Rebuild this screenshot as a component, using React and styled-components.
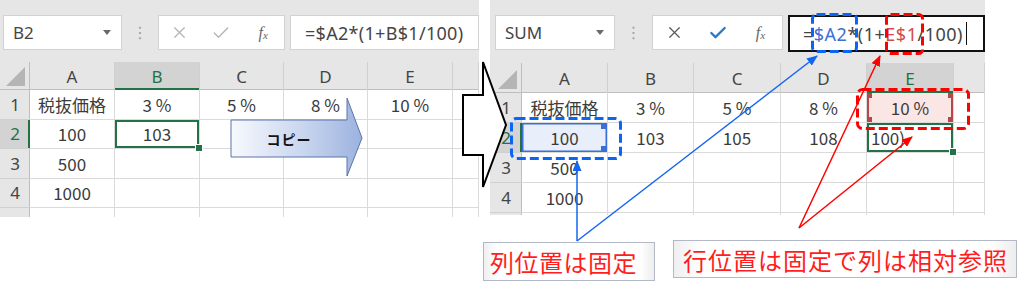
import React from "react";
import styled, { createGlobalStyle, css } from "styled-components";
import { X, Check } from "lucide-react";

const GlobalStyle = createGlobalStyle`
  body {
    margin: 0;
    background: #fff;
  }
`;

const Canvas = styled.div`
  position: relative;
  width: 1024px;
  height: 292px;
  overflow: hidden;
  display: flex;
  align-items: flex-start;
  gap: 11px;
  font-family: "Noto Sans CJK JP", "Noto Sans", sans-serif;
`;

const SheetFrame = styled.div`
  flex: none;
  width: ${(p) => p.$width}px;
  height: ${(p) => p.$height}px;
  overflow: hidden;
  background: #e6e6e6;
  display: flex;
  flex-direction: column;
`;

const FormulaBar = styled.div`
  flex: none;
  height: ${(p) => p.$height}px;
  box-sizing: border-box;
  padding: 15px 0 0 ${(p) => p.$inset}px;
  display: flex;
  align-items: flex-start;
`;

const NameBox = styled.div`
  width: ${(p) => p.$w}px;
  height: 35px;
  box-sizing: border-box;
  background: #fff;
  border: 1px solid #d2d2d2;
  padding: 0 10px 0 9px;
  display: flex;
  align-items: center;
  justify-content: space-between;
  font: 17px "Noto Sans", sans-serif;
  color: #454545;
`;

const DropTri = styled.span`
  width: 0;
  height: 0;
  border-left: 4px solid transparent;
  border-right: 4px solid transparent;
  border-top: 5px solid #6a6a6a;
`;

const Grip = styled.div`
  width: ${(p) => p.$w}px;
  height: 35px;
  display: flex;
  align-items: center;
  justify-content: center;
  font: 16px "DejaVu Sans", sans-serif;
  color: #a0a0a0;
`;

const ButtonBox = styled.div`
  width: ${(p) => p.$w}px;
  height: 35px;
  box-sizing: border-box;
  background: #fff;
  border: 1px solid #d2d2d2;
  display: grid;
  grid-template-columns: repeat(3, 1fr);
  align-items: center;
  justify-items: center;
`;

const Fx = styled.span`
  font: italic 16px "Liberation Serif", serif;
  color: #666;
  sub {
    font-size: 11px;
    vertical-align: -1px;
  }
`;

const FormulaInput = styled.div`
  flex: 1;
  height: ${(p) => (p.$live ? 37 : 35)}px;
  margin-left: 5px;
  box-sizing: border-box;
  background: #fff;
  border: ${(p) => (p.$live ? "2px solid #111" : "1px solid #d2d2d2")};
  padding-left: ${(p) => (p.$live ? 13 : 14)}px;
  display: flex;
  align-items: center;
  font: 18px "Noto Sans", sans-serif;
  letter-spacing: ${(p) => (p.$live ? 0.5 : 0.3)}px;
  color: #454545;
  white-space: nowrap;
`;

const Ref = styled.span`
  color: ${(p) => p.$color};
`;

const TextCaret = styled.span`
  display: inline-block;
  width: 0;
  height: 23px;
  margin-left: 3px;
  border-left: 1px solid #111;
`;

const Grid = styled.div`
  display: grid;
  grid-template-columns: ${(p) => p.$cols};
  grid-template-rows: ${(p) => p.$head}px;
  grid-auto-rows: ${(p) => p.$row}px;
  background: #fff;
`;

const HeadBase = styled.div`
  box-sizing: border-box;
  display: flex;
  align-items: center;
  justify-content: center;
  background: ${(p) => (p.$on ? "#d3d3d3" : "#e6e6e6")};
  color: ${(p) => (p.$on ? "#217346" : "#444")};
  font: 17px "Noto Sans", sans-serif;
`;

const ColHead = styled(HeadBase)`
  border-right: 1px solid #d0d0d0;
  box-shadow: inset 0 ${(p) => (p.$on ? -2 : -1)}px 0
    ${(p) => (p.$on ? "#217346" : "#bebebe")};
`;

const Corner = styled(ColHead)`
  position: relative;
  border-right: 1px solid #bebebe;
  &::after {
    content: "";
    position: absolute;
    right: 4px;
    bottom: 4px;
    border-left: 19px solid transparent;
    border-bottom: 19px solid #b5b5b5;
  }
`;

const RowHead = styled(HeadBase)`
  border-bottom: 1px solid #d0d0d0;
  box-shadow: inset ${(p) => (p.$on ? -2 : -1)}px 0 0
    ${(p) => (p.$on ? "#217346" : "#bebebe")};
`;

const fillHandle = css`
  position: relative;
  box-shadow: inset 0 0 0 2px #217346;
  &::after {
    content: "";
    position: absolute;
    right: -4px;
    bottom: -4px;
    width: 6px;
    height: 6px;
    background: #217346;
    border: 1px solid #fff;
  }
`;

const marks = {
  active: fillHandle,
  editing: css`
    ${fillHandle}
    justify-content: flex-start;
    padding-left: 4px;
  `,
  refBlue: css`
    background: linear-gradient(#3a6fd8, #3a6fd8) right top / 6px 6px no-repeat,
      linear-gradient(#3a6fd8, #3a6fd8) right bottom / 6px 6px no-repeat,
      #e8eefa;
    box-shadow: inset 0 0 0 1.5px #3a6fd8;
  `,
  refRed: css`
    background: linear-gradient(#b8474a, #b8474a) left top / 5px 5px no-repeat,
      linear-gradient(#b8474a, #b8474a) right top / 5px 5px no-repeat,
      linear-gradient(#b8474a, #b8474a) left bottom / 5px 5px no-repeat,
      linear-gradient(#b8474a, #b8474a) right bottom / 5px 5px no-repeat,
      #fbe6e6;
    box-shadow: inset 2px 0 0 #b8474a, inset -2px 0 0 #b8474a;
  `,
};

const Cell = styled.div`
  box-sizing: border-box;
  display: flex;
  align-items: center;
  justify-content: center;
  background: #fff;
  border-right: 1px solid #dadada;
  border-bottom: 1px solid #dadada;
  font-size: 17px;
  color: #3b3b3b;
  white-space: nowrap;
  ${(p) => p.$mark && marks[p.$mark]}
`;

const ArrowBox = styled.div`
  position: absolute;
  left: 229px;
  top: 96px;
  width: 134px;
  height: 81px;
`;

const ArrowText = styled.span`
  position: absolute;
  left: 2px;
  top: 24px;
  width: 116px;
  height: 37px;
  display: flex;
  align-items: center;
  justify-content: center;
  font: 700 14px "Noto Sans CJK JP", sans-serif;
  color: #141414;
  letter-spacing: 1px;
`;

const Overlay = styled.svg`
  position: absolute;
  left: 0;
  top: 0;
  pointer-events: none;
`;

const Callout = styled.div`
  position: absolute;
  left: ${(p) => p.$x}px;
  top: ${(p) => p.$y}px;
  width: ${(p) => p.$w}px;
  height: ${(p) => p.$h}px;
  box-sizing: border-box;
  padding-left: ${(p) => p.$pad}px;
  border: 1px solid #b3b8c6;
  background: linear-gradient(90deg, #efefef, #fff 8%, #fff 92%, #ededed);
  display: flex;
  align-items: center;
  font: 24px "Noto Sans CJK JP", sans-serif;
  letter-spacing: ${(p) => p.$track}px;
  color: #ff1d1d;
  white-space: nowrap;
`;

const fill = (arr) => [...arr, ...Array(6 - arr.length).fill("")];

const leftSheet = {
  width: 479,
  height: 217,
  barHeight: 62,
  inset: 3,
  nameW: 119,
  gripW: 36,
  btnW: 127,
  name: "B2",
  live: false,
  formula: "=$A2*(1+B$1/100)",
  cols: [30, 85, 85, 84, 84, 85, 26],
  headH: 28,
  rowH: 29.5,
  selCol: 2,
  selRow: 2,
  rows: [
    fill(["税抜価格", "3 %", "5 %", "8 %", "10 %"]),
    fill(["100", "103"]),
    fill(["500"]),
    fill(["1000"]),
    fill([]),
  ],
  marks: { "2-2": "active" },
};

const rightSheet = {
  width: 495,
  height: 215,
  barHeight: 63,
  inset: 5,
  nameW: 120,
  gripW: 37,
  btnW: 131,
  name: "SUM",
  live: true,
  formula: (
    <>
      =<Ref $color="#3d6fd2">$A2</Ref>*(1+<Ref $color="#d24a4a">E$1</Ref>/100)
      <TextCaret />
    </>
  ),
  cols: [32, 86, 86, 87, 86, 87, 31],
  headH: 30,
  rowH: 30,
  selCol: 5,
  selRow: 2,
  rows: [
    fill(["税抜価格", "3 %", "5 %", "8 %", "10 %"]),
    fill(["100", "103", "105", "108", "100)"]),
    fill(["500"]),
    fill(["1000"]),
    fill([]),
  ],
  marks: { "1-5": "refRed", "2-1": "refBlue", "2-5": "editing" },
};

const Sheet = ({ config: c }) => (
  <SheetFrame $width={c.width} $height={c.height}>
    <FormulaBar $height={c.barHeight} $inset={c.inset}>
      <NameBox $w={c.nameW}>
        {c.name}
        <DropTri />
      </NameBox>
      <Grip $w={c.gripW}>⋮</Grip>
      <ButtonBox $w={c.btnW}>
        <X size={19} strokeWidth={1.5} color={c.live ? "#5a5a5a" : "#b4b4b4"} />
        <Check
          size={20}
          strokeWidth={c.live ? 2.8 : 1.6}
          color={c.live ? "#2b79c9" : "#b4b4b4"}
        />
        <Fx>
          f<sub>x</sub>
        </Fx>
      </ButtonBox>
      <FormulaInput $live={c.live}>{c.formula}</FormulaInput>
    </FormulaBar>
    <Grid
      $cols={c.cols.map((w) => `${w}px`).join(" ")}
      $head={c.headH}
      $row={c.rowH}
    >
      <Corner />
      {c.cols.slice(1).map((_, i) => (
        <ColHead key={i} $on={i + 1 === c.selCol}>
          {"ABCDE"[i] || ""}
        </ColHead>
      ))}
      {c.rows.map((row, r) => (
        <React.Fragment key={r}>
          {/* the last row is cut by the sheet edge, so its number stays blank */}
          <RowHead $on={r + 1 === c.selRow}>
            {r < c.rows.length - 1 ? r + 1 : ""}
          </RowHead>
          {row.map((v, ci) => (
            <Cell key={ci} $mark={c.marks[`${r + 1}-${ci + 1}`]}>
              {v}
            </Cell>
          ))}
        </React.Fragment>
      ))}
    </Grid>
  </SheetFrame>
);

const CopyArrow = () => (
  <ArrowBox>
    <svg width="134" height="81" viewBox="0 0 134 81">
      <defs>
        <linearGradient id="copyFill" x1="0" y1="0" x2="1" y2="0">
          <stop offset="0" stopColor="#f7f9fd" />
          <stop offset="0.55" stopColor="#c9d6ef" />
          <stop offset="1" stopColor="#9cb2de" />
        </linearGradient>
      </defs>
      <polygon
        points="2,24 118,24 118,2 133,42 118,80 118,61 2,61"
        fill="url(#copyFill)"
        stroke="#5d74a6"
        strokeWidth="1"
      />
    </svg>
    <ArrowText>コピー</ArrowText>
  </ArrowBox>
);

const Annotations = () => (
  <Overlay width="1024" height="292" viewBox="0 0 1024 292">
    <defs>
      <marker
        id="headBlue"
        markerUnits="userSpaceOnUse"
        markerWidth="11"
        markerHeight="9"
        refX="10"
        refY="4.5"
        orient="auto"
      >
        <path d="M0,0 L11,4.5 L0,9 z" fill="#1466f0" />
      </marker>
      <marker
        id="headRed"
        markerUnits="userSpaceOnUse"
        markerWidth="11"
        markerHeight="9"
        refX="10"
        refY="4.5"
        orient="auto"
      >
        <path d="M0,0 L11,4.5 L0,9 z" fill="#ff0000" />
      </marker>
    </defs>

    <polygon
      points="463,95 483,95 483,62 506,125 483,187 483,155 463,155"
      fill="#fff"
      stroke="#000"
      strokeWidth="2"
    />

    <g fill="none" strokeWidth="3" strokeDasharray="9 4">
      <rect x="812.5" y="14.5" width="44" height="37" rx="4" stroke="#0a64f5" />
      <rect x="511.5" y="118.5" width="109" height="40" rx="5" stroke="#0a64f5" />
      <rect x="886.5" y="14.5" width="36" height="39" rx="4" stroke="#ff0000" />
      <rect x="857.5" y="89.5" width="111" height="39" rx="5" stroke="#ff0000" />
    </g>

    <g strokeWidth="1.5">
      <line x1="577" y1="241" x2="577" y2="161" stroke="#1466f0" markerEnd="url(#headBlue)" />
      <line x1="577" y1="241" x2="817" y2="56" stroke="#1466f0" markerEnd="url(#headBlue)" />
      <line x1="799" y1="228" x2="880" y2="56" stroke="#ff0000" markerEnd="url(#headRed)" />
      <line x1="799" y1="228" x2="912" y2="137" stroke="#ff0000" markerEnd="url(#headRed)" />
    </g>
  </Overlay>
);

export default function App() {
  return (
    <>
      <GlobalStyle />
      <Canvas>
        <Sheet config={leftSheet} />
        <Sheet config={rightSheet} />
        <CopyArrow />
        <Annotations />
        <Callout $x={483} $y={242} $w={172} $h={39} $pad={6} $track={0.5}>
          列位置は固定
        </Callout>
        <Callout $x={673} $y={240} $w={344} $h={38} $pad={9} $track={1}>
          行位置は固定で列は相対参照
        </Callout>
      </Canvas>
    </>
  );
}
